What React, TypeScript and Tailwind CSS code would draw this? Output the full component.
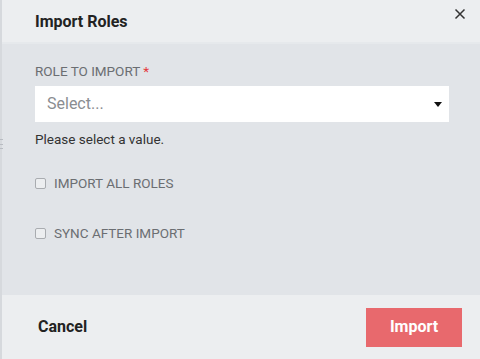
import React from "react";

export default function App() {
  return (
    <div className="w-[480px] h-[359px] flex overflow-hidden bg-[#e1e4e8] font-['Roboto',sans-serif]">
      <div className="w-[2px] shrink-0 bg-[#d6d9dd] relative">
        <div className="absolute left-0 top-[139px] w-[3px] h-[10px] flex flex-col justify-between">
          <div className="h-px bg-[#b8bcc2]" />
          <div className="h-px bg-[#b8bcc2]" />
          <div className="h-px bg-[#b8bcc2]" />
        </div>
      </div>
      <div className="flex-1 flex flex-col">
        <div className="h-[44px] shrink-0 bg-[#eceef0] flex items-start justify-between pl-[33px] pr-[14px] border-b-2 border-[#e6e9ec]">
          <div className="mt-[12px] text-[16px] font-bold text-[#222] leading-[20px]">Import Roles</div>
          <svg className="mt-[8px]" width="12" height="12" viewBox="0 0 12 12">
            <path d="M1.5 1.5 L10.5 10.5 M10.5 1.5 L1.5 10.5" stroke="#333" strokeWidth="1.5" />
          </svg>
        </div>
        <div className="flex-1 bg-[#e1e4e8] pl-[33px] pr-[31px] pt-[19px] flex flex-col">
          <div className="text-[13.5px] leading-[16px] text-[#6b6e72]">
            ROLE TO IMPORT <span className="text-[#e5393d]">*</span>
          </div>
          <div className="mt-[7px] h-[36px] bg-white flex items-center justify-between pl-[12px] pr-[7px]">
            <span className="text-[16px] text-[#8a8d91]">Select...</span>
            <svg width="8" height="5" viewBox="0 0 8 5">
              <path d="M0 0 L8 0 L4 5 Z" fill="#111" />
            </svg>
          </div>
          <div className="mt-[8px] text-[13.5px] leading-[18px] text-[#333]">Please select a value.</div>
          <label className="mt-[27px] flex items-center gap-[8px]">
            <span className="w-[11px] h-[11px] rounded-[2px] border border-[#a9acb0] bg-[#eceef0]" />
            <span className="text-[13.5px] text-[#6b6e72] leading-[16px]">IMPORT ALL ROLES</span>
          </label>
          <label className="mt-[34px] flex items-center gap-[8px]">
            <span className="w-[11px] h-[11px] rounded-[2px] border border-[#a9acb0] bg-[#eceef0]" />
            <span className="text-[13.5px] text-[#6b6e72] leading-[16px]">SYNC AFTER IMPORT</span>
          </label>
        </div>
        <div className="h-[64px] shrink-0 bg-[#eceef0] flex items-center justify-between pl-[36px] pr-[18px]">
          <span className="text-[16px] font-bold text-[#222]">Cancel</span>
          <button className="w-[96px] h-[39px] bg-[#e8696d] text-white text-[16px] font-bold">Import</button>
        </div>
      </div>
    </div>
  );
}
